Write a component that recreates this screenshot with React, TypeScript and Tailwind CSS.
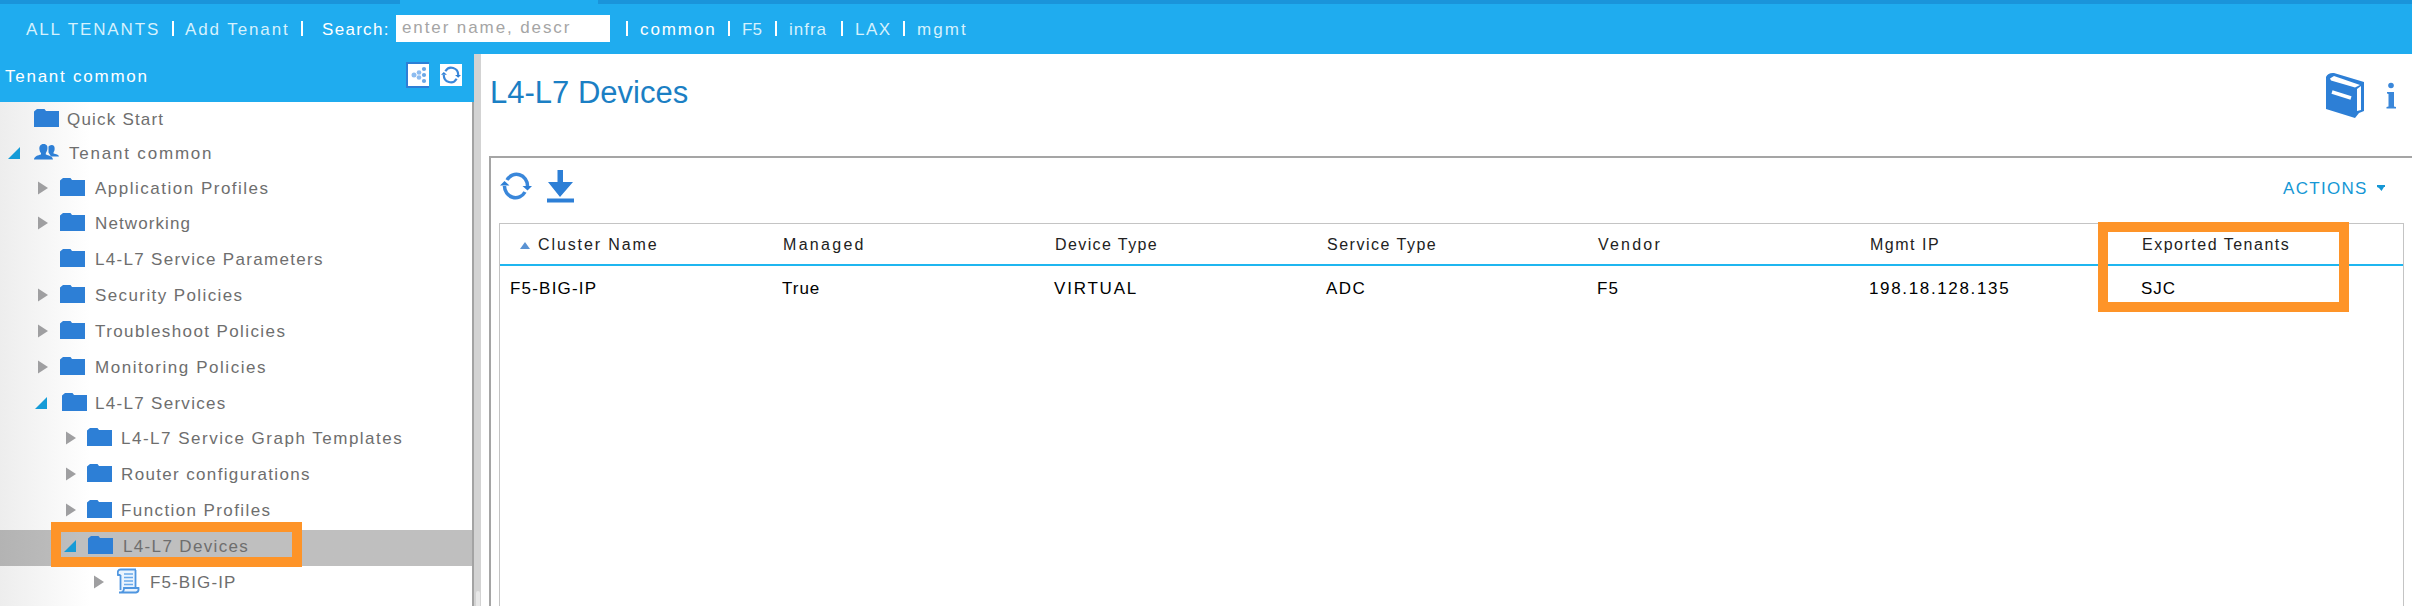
import React from "react";

const Bar = ({ className = "" }: { className?: string }) => (
  <span className={`mt-px h-[15px] w-[2px] shrink-0 bg-white ${className}`} />
);

const Folder = () => (
  <svg width="25" height="20" viewBox="0 0 25 20" className="shrink-0">
    <path d="M0 3.500L3 1H10.500L12 3H25V19H0Z" fill="#2d7fd6" />
  </svg>
);

const Users = () => (
  <svg width="25" height="18" viewBox="0 0 25 18" className="shrink-0">
    <g fill="#2d7fd6">
      <path d="M17.500 2C20 2 21 4 20.600 6.500C20.400 8 20 8.500 19.500 9.500V10.500C22 11 24.700 11.500 25 13.500H17L14.500 9.500V3.500Q15.500 2 17.500 2Z" />
      <path d="M9.500 1C13 1 13.800 3.500 13.400 6C13.200 7.800 12.500 9 11.800 10V11.500C14 12.500 18.500 12.500 19 16.500H0C0.300 13 4 12.500 7 11.500V10C6 9 5.500 7.500 5.400 6C5.100 3.500 6.500 1 9.500 1Z" />
    </g>
  </svg>
);

const Scroll = () => (
  <svg width="23" height="26" viewBox="0 0 23 26" className="shrink-0">
    <path d="M3 1.500H18.500V19.500H21.500Q22 24.500 18.500 24.500H5Q3 24.500 3.500 21V7H1Q0 1.500 3 1.500Z" fill="#eaf4fe" />
    <path d="M3.500 7H1Q0 1.500 3.500 1.500H19M3.500 7V22M18.500 2V19.500M2 24.500H19Q22 24 21.500 20H7Q7 24 4 24.500" fill="none" stroke="#4f96e0" strokeWidth="1.800" />
    <path d="M7 6H16M7 9.500H16M7 13H16M7 16.500H16" stroke="#6aa9ea" strokeWidth="1.500" />
  </svg>
);

const Closed = () => (
  <svg width="10" height="14" viewBox="0 0 10 14" className="shrink-0 -translate-y-px">
    <path d="M0 0.500L10 7L0 13.500Z" fill="#9f9fa1" />
  </svg>
);

const Open = () => (
  <svg width="12" height="12" viewBox="0 0 12 12" className="shrink-0 -translate-y-px">
    <path d="M12 0V12H0Z" fill="#159bd7" />
  </svg>
);

const Refresh = ({ className }: { className: string }) => (
  <svg viewBox="0 0 32 28" className={className}>
    <path d="M7 8A11 11.500 0 0 1 27.500 14M25 20A11 11.500 0 0 1 4.500 14" fill="none" stroke="#3a87da" strokeWidth="3.500" />
    <path d="M22.500 14H32L27.500 18.500ZM0 13.500L4.500 9L9.500 13.500Z" fill="#2d7fd6" />
  </svg>
);

type Row = {
  label: string;
  state?: "open" | "closed";
  icon?: "users" | "scroll";
  size: string;
  pad: string;
  gap: string;
  text: string;
};

const rows: Row[] = [
  { label: "Quick Start", size: "h-[36px]", pad: "pl-[8px]", gap: "ml-[16px]", text: "ml-[8px] tracking-[1.2px]" },
  { label: "Tenant common", state: "open", icon: "users", size: "h-[34px] pb-[2px]", pad: "pl-[8px]", gap: "ml-[14px]", text: "ml-[10px] tracking-[1.8px]" },
  { label: "Application Profiles", state: "closed", size: "h-[35px] pb-[2px]", pad: "pl-[38px]", gap: "ml-[12px]", text: "ml-[10px] tracking-[1.5px]" },
  { label: "Networking", state: "closed", size: "h-[36px] pb-[2px]", pad: "pl-[38px]", gap: "ml-[12px]", text: "ml-[10px] tracking-[1.1px]" },
  { label: "L4-L7 Service Parameters", size: "h-[36px] pb-[2px]", pad: "pl-[38px]", gap: "ml-[12px]", text: "ml-[10px] tracking-[1.3px]" },
  { label: "Security Policies", state: "closed", size: "h-[36px] pb-[2px]", pad: "pl-[38px]", gap: "ml-[12px]", text: "ml-[10px] tracking-[1.4px]" },
  { label: "Troubleshoot Policies", state: "closed", size: "h-[36px] pb-[2px]", pad: "pl-[38px]", gap: "ml-[12px]", text: "ml-[10px] tracking-[1.4px]" },
  { label: "Monitoring Policies", state: "closed", size: "h-[36px] pb-[2px]", pad: "pl-[38px]", gap: "ml-[12px]", text: "ml-[10px] tracking-[1.55px]" },
  { label: "L4-L7 Services", state: "open", size: "h-[35px] pb-[2px]", pad: "pl-[35px]", gap: "ml-[15px]", text: "ml-[8px] tracking-[1.3px]" },
  { label: "L4-L7 Service Graph Templates", state: "closed", size: "h-[36px] pb-[2px]", pad: "pl-[66px]", gap: "ml-[11px]", text: "ml-[9px] tracking-[1.5px]" },
  { label: "Router configurations", state: "closed", size: "h-[36px] pb-[2px]", pad: "pl-[66px]", gap: "ml-[11px]", text: "ml-[9px] tracking-[1.35px]" },
  { label: "Function Profiles", state: "closed", size: "h-[36px] pb-[2px]", pad: "pl-[66px]", gap: "ml-[11px]", text: "ml-[9px] tracking-[1.4px]" },
  { label: "L4-L7 Devices", state: "open", size: "h-[36px] pb-[2px] bg-linear-to-r from-[#b3b3b3] via-[#bfbfbf] via-[80px] to-[#bfbfbf]", pad: "pl-[64px]", gap: "ml-[12px]", text: "ml-[10px] tracking-[1.35px]" },
  { label: "F5-BIG-IP", state: "closed", icon: "scroll", size: "h-[36px] pb-[2px]", pad: "pl-[94px]", gap: "ml-[13px]", text: "ml-[10px] tracking-[1.1px]" },
];

const TreeRow = ({ row }: { row: Row }) => (
  <div className={`flex shrink-0 items-center ${row.size} ${row.pad}`}>
    {row.state === "open" ? <Open /> : row.state === "closed" ? <Closed /> : <span className="w-[10px]" />}
    <span className={`flex -translate-y-[2px] ${row.gap}`}>
      {row.icon === "users" ? <Users /> : row.icon === "scroll" ? <Scroll /> : <Folder />}
    </span>
    <span className={`whitespace-nowrap ${row.text}`}>{row.label}</span>
  </div>
);

const columns = [
  { head: "Cluster Name", value: "F5-BIG-IP", width: "w-[272px]", h: "tracking-[1.9px]", v: "tracking-[1.2px]" },
  { head: "Managed", value: "True", width: "w-[272px]", h: "tracking-[2.3px]", v: "tracking-[1px]" },
  { head: "Device Type", value: "VIRTUAL", width: "w-[272px]", h: "tracking-[1.4px]", v: "tracking-[1.8px]" },
  { head: "Service Type", value: "ADC", width: "w-[271px]", h: "tracking-[1.5px]", v: "tracking-[1.5px]" },
  { head: "Vendor", value: "F5", width: "w-[272px]", h: "tracking-[2.2px]", v: "tracking-[1px]" },
  { head: "Mgmt IP", value: "198.18.128.135", width: "w-[272px]", h: "tracking-[1.5px]", v: "tracking-[1.65px]" },
  { head: "Exported Tenants", value: "SJC", width: "w-[261px]", h: "tracking-[1.5px]", v: "tracking-[1px]" },
];

export default function App() {
  return (
    <div className="relative flex h-[606px] w-[2412px] flex-col overflow-hidden bg-white font-['Liberation_Sans',Arial,sans-serif] text-[17px] leading-[20px]">
      <header className="h-[54px] shrink-0 bg-[#1facef]">
        <div className="flex h-[4px] justify-between">
          <div className="w-[400px] bg-[#1a94da]" />
          <div className="w-[1814px] bg-[#1a94da]" />
        </div>
        <nav className="flex h-[50px] items-start pt-[16px] pl-[26px] whitespace-nowrap text-[#d5f1fd]">
          <span className="w-[146px] tracking-[1.9px]">ALL TENANTS</span>
          <Bar />
          <span className="ml-[11px] w-[116px] tracking-[1.9px]">Add Tenant</span>
          <Bar />
          <span className="ml-[19px] w-[74px] tracking-[1.3px] text-white">Search:</span>
          <span className="h-[27px] w-[214px] -translate-y-[5px] bg-white pl-[6px] leading-[26px] tracking-[1.9px] text-[#a5a5a5]">enter name, descr</span>
          <Bar className="ml-[16px]" />
          <span className="ml-[12px] w-[88px] tracking-[1.9px] text-white">common</span>
          <Bar />
          <span className="ml-[12px] w-[33px]">F5</span>
          <Bar />
          <span className="ml-[12px] w-[52px] tracking-[1px]">infra</span>
          <Bar />
          <span className="ml-[12px] w-[48px] tracking-[1.5px]">LAX</span>
          <Bar />
          <span className="ml-[12px] tracking-[2.1px]">mgmt</span>
        </nav>
      </header>

      <div className="flex min-h-0 flex-1">
        <aside className="flex w-[474px] shrink-0 flex-col">
          <div className="flex h-[48px] shrink-0 items-start bg-[#1facef] pl-[5px] text-white">
            <span className="mt-[13px] w-[401px] tracking-[1.75px]">Tenant common</span>
            <span className="mt-[8px] flex h-[26px] w-[23px] items-center justify-center border-2 border-r-0 border-[#2d7fd6] bg-white">
              <svg width="17" height="18" viewBox="0 0 17 18">
                <g fill="#8dbcf0">
                  <circle cx="4" cy="9" r="2.500" />
                  <circle cx="9" cy="6.500" r="2.300" />
                  <circle cx="9" cy="11.500" r="2.300" />
                </g>
                <g fill="#6ba8e6">
                  <circle cx="14" cy="3" r="2.100" />
                  <circle cx="14" cy="9" r="2.100" />
                  <circle cx="14" cy="15" r="2.100" />
                </g>
              </svg>
            </span>
            <span className="mt-[10px] ml-[11px] flex h-[22px] w-[22px] items-center justify-center bg-white">
              <Refresh className="h-[18px] w-[20px]" />
            </span>
          </div>
          <div className="flex min-h-0 flex-1 flex-col overflow-hidden border-r-2 border-[#a3a3a3] bg-linear-to-r from-[#ededed] via-white via-[90px] to-white text-[#6e6e6e]">
            {rows.map((row) => (
              <TreeRow key={row.label} row={row} />
            ))}
          </div>
        </aside>
        <div className="flex w-[7px] shrink-0 flex-col justify-end bg-[#d3d3d3] pl-[2px]">
          <div className="h-[15px] w-[4px] rounded-t-full bg-[#e8e8e8]" />
        </div>

        <main className="flex min-w-0 flex-1 flex-col pl-[8px]">
          <div className="flex h-[102px] shrink-0 items-start">
            <h1 className="mt-[21px] w-[1836px] pl-px text-[31px] leading-[36px] text-[#1b7fc4]">L4-L7 Devices</h1>
            <svg width="40" height="48" viewBox="0 0 40 48" className="mt-[18px]">
              <path d="M1 5Q3 0.500 9 1L39 10V39L34 41L30 46L1 37Z" fill="#2d7fd6" />
              <path d="M5 6.500L9 4L35 13L30 15.500L6 8.500Z" fill="white" />
              <path d="M32 17L36 14V38L32 39Z" fill="white" />
              <path d="M7 20L26 26" stroke="white" strokeWidth="3.500" />
            </svg>
            <svg width="10" height="27" viewBox="0 0 10 27" className="mt-[28px] ml-[21px]">
              <g fill="#3a87da">
                <circle cx="5" cy="3.500" r="2.800" />
                <path d="M1 10H8V24.500L10 25V26.500H0.500V25L2.500 24.500V12L1 11.500Z" />
              </g>
            </svg>
          </div>
          <section className="flex min-h-0 flex-1 flex-col border-t-2 border-l-2 border-[#a5a5a5] pl-[8px]">
            <div className="flex h-[65px] shrink-0 items-start">
              <Refresh className="mt-[14px] ml-px h-[28px] w-[32px]" />
              <svg width="27" height="33" viewBox="0 0 27 33" className="mt-[12px] ml-[15px]">
                <path d="M10.500 0H16V12H26L13 27L1 12H10.500ZM0 28.500H27V32.500H0Z" fill="#2d7fd6" />
              </svg>
              <span className="mt-[21px] ml-[1709px] w-[94px] tracking-[1.3px] text-[#1597d5]">ACTIONS</span>
              <svg width="8" height="6" viewBox="0 0 8 6" className="mt-[27px]">
                <path d="M0 0H8V2H7L4.500 6L2 3L0 2Z" fill="#1597d5" />
              </svg>
            </div>
            <div className="flex min-h-0 w-[1905px] flex-1 flex-col border border-b-0 border-[#c4c4c4]">
              <div className="flex h-[42px] shrink-0 items-center border-b-2 border-[#1fb6f0] pt-[2px] pl-[11px] text-[16px] text-[#222]">
                {columns.map((c, i) => (
                  <div key={c.head} className={`flex shrink-0 items-center ${c.width}`}>
                    {i === 0 && (
                      <svg width="10" height="7" viewBox="0 0 10 7" className="mr-[8px] ml-[9px]">
                        <path d="M5 0L10 7H0Z" fill="#5b93d3" />
                      </svg>
                    )}
                    <span className={c.h}>{c.head}</span>
                  </div>
                ))}
              </div>
              <div className="flex h-[45px] shrink-0 items-center pl-[10px] text-black">
                {columns.map((c) => (
                  <span key={c.head} className={`shrink-0 ${c.width} ${c.v}`}>{c.value}</span>
                ))}
              </div>
            </div>
          </section>
        </main>
      </div>

      <div className="absolute top-[522px] left-[51px] h-[45px] w-[251px] border-10 border-[#fe9428]" />
      <div className="absolute top-[222px] left-[2098px] h-[90px] w-[251px] border-10 border-[#fe9428]" />
    </div>
  );
}
